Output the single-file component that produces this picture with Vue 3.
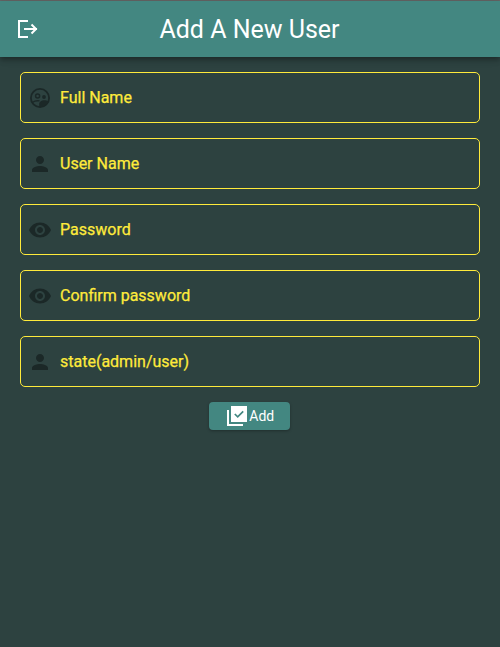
<script setup>
const fields = [
  { label: 'Full Name', icon: 'group' },
  { label: 'User Name', icon: 'person' },
  { label: 'Password', icon: 'eye' },
  { label: 'Confirm password', icon: 'eye' },
  { label: 'state(admin/user)', icon: 'person' },
]
</script>

<template>
  <div class="screen">
    <header class="bar">
      <button class="exit" aria-label="Log out">
        <svg width="24" height="24" viewBox="0 0 24 24">
          <path d="M13 4H4V20H13" />
          <path d="M9 12H22M16.500 7.500L21 12L16.500 16.500" />
        </svg>
      </button>
      <h1>Add A New User</h1>
    </header>
    <main class="form">
      <label v-for="f in fields" :key="f.label" class="field">
        <svg class="icon" width="24" height="24" viewBox="0 0 24 24">
          <template v-if="f.icon === 'group'">
            <circle class="ring" cx="12" cy="12" r="9.1" />
            <circle class="head" cx="9.6" cy="10" r="2" />
            <circle cx="16" cy="11" r="1.9" />
            <path class="shoulder" d="M4.800 16.200C6.500 14.900 9 14.500 11.600 14.900" />
            <path d="M11.200 21V17.600C11.200 15.600 14 14.200 16 14.200C17.800 14.200 19.600 14.700 20.600 15.500C18.900 19.400 15.500 21.500 11.200 21z" />
          </template>
          <path v-else-if="f.icon === 'person'" d="M12 12c2.210 0 4-1.790 4-4s-1.790-4-4-4-4 1.790-4 4 1.790 4 4 4zm0 2c-2.670 0-8 1.340-8 4v2h16v-2c0-2.660-5.330-4-8-4z" />
          <path v-else d="M12 4.500C7 4.500 2.730 7.610 1 12c1.730 4.390 6 7.500 11 7.500s9.270-3.110 11-7.500c-1.730-4.390-6-7.500-11-7.500zM12 17c-2.760 0-5-2.240-5-5s2.240-5 5-5 5 2.240 5 5-2.240 5-5 5zm0-8c-1.660 0-3 1.340-3 3s1.340 3 3 3 3-1.340 3-3-1.340-3-3-3z" />
        </svg>
        <span>{{ f.label }}</span>
      </label>
      <button class="add">
        <svg width="24" height="24" viewBox="0 0 24 24">
          <path d="M6 2H22V18H6zM2 6H4V20H18V22H2z" />
          <path class="tick" d="M9.800 10L12.700 12.900L18.200 7.400" />
        </svg>
        <span>Add</span>
      </button>
    </main>
  </div>
</template>

<style>
body {
  margin: 0;
  background: #2d4240;
}
</style>

<style scoped>
.screen {
  box-sizing: border-box;
  height: 647px;
  background: #2d4240;
  border-top: 1px solid #656565;
  font-family: Roboto, sans-serif;
}
.bar {
  display: grid;
  grid-template-columns: 54px 1fr 55px;
  align-items: center;
  height: 56px;
  background: #438781;
  box-shadow: 0 2px 4px -1px rgba(0, 0, 0, 0.2), 0 4px 5px rgba(0, 0, 0, 0.14), 0 1px 10px rgba(0, 0, 0, 0.12);
}
.exit {
  display: flex;
  justify-content: center;
  padding: 0;
  border: 0;
  background: none;
}
.exit svg {
  fill: none;
  stroke: #fff;
  stroke-width: 2;
}
h1 {
  margin: 0;
  padding-top: 2px;
  text-align: center;
  color: #fff;
  font-size: 25px;
  font-weight: 400;
  line-height: 30px;
}
.form {
  display: flex;
  flex-direction: column;
  gap: 15px;
  padding: 15px 20px;
}
.field {
  box-sizing: border-box;
  display: flex;
  align-items: center;
  gap: 8px;
  height: 51px;
  padding-left: 7px;
  border: 1px solid #ffeb3b;
  border-radius: 5px;
  color: #ffeb3b;
  font-size: 16px;
  line-height: 20px;
  -webkit-text-stroke: 0.25px #ffeb3b;
}
.icon {
  fill: #1b2827;
}
.ring,
.head,
.shoulder {
  fill: none;
  stroke: #1b2827;
  stroke-width: 1.8;
}
.head {
  stroke-width: 1.5;
}
.shoulder {
  stroke-width: 1.3;
}
.add {
  align-self: center;
  display: flex;
  align-items: center;
  justify-content: center;
  width: 81px;
  height: 28px;
  margin-right: 1px;
  padding: 0;
  border: 0;
  border-radius: 4px;
  background: #438781;
  box-shadow: 0 1px 3px rgba(0, 0, 0, 0.3);
  color: #fff;
  font-family: inherit;
  font-size: 14px;
}
.add svg {
  fill: #fff;
}
.add span {
  padding-left: 0.5px;
}
.tick {
  fill: none;
  stroke: #438781;
  stroke-width: 1.7;
}
</style>
